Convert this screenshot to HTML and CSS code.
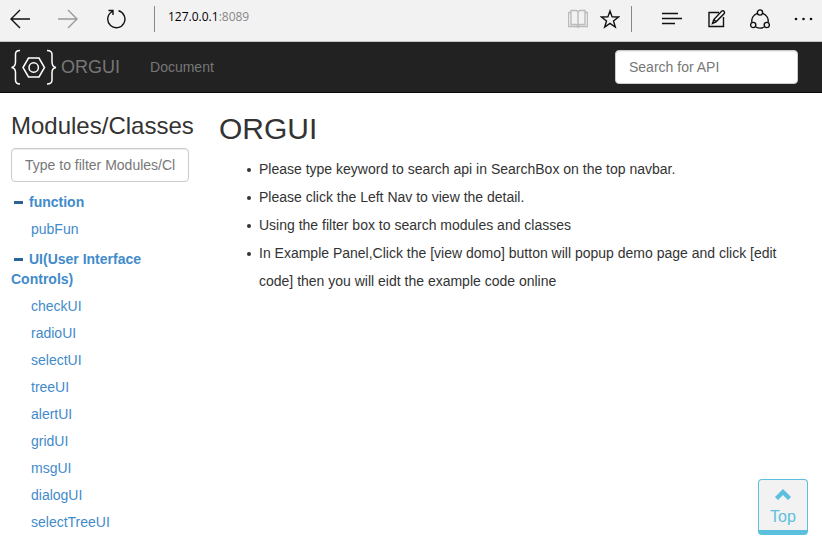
FILE: index.html
```html
<!DOCTYPE html>
<html lang="en">
<head>
<meta charset="utf-8">
<title>ORGUI</title>
<link rel="stylesheet" href="styles.css">
</head>
<body>
<div class="browser" role="toolbar" aria-label="Browser">
  <button class="tool back" aria-label="Back"><svg width="20" height="20" viewBox="0 0 20 20"><path d="M20 10H1M10 1L1 10l9 9"/></svg></button>
  <button class="tool forward" aria-label="Forward"><svg width="20" height="20" viewBox="0 0 20 20"><path d="M0 10h19M10 1l9 9-9 9"/></svg></button>
  <button class="tool reload" aria-label="Refresh"><svg width="20" height="20" viewBox="0 0 20 20"><path d="M12.500 1.800A8.600 8.600 0 1 1 5.500 3L6.500 2M2.500 1.500H7V6"/></svg></button>
  <span class="divider"></span>
  <div class="address"><span class="host">127.0.0.1</span>:8089</div>
  <button class="tool reading" aria-label="Reading view"><svg width="20" height="20" viewBox="0 0 20 20"><path d="M3 3.500H.5v14h8l1.500 1 1.500-1h8v-14H17M10 3v14M10 3L8.500 1.500H3v14h5.500L10 17l1.500-1.500H17v-14h-5.500z"/></svg></button>
  <button class="tool star" aria-label="Add to favorites"><svg width="20" height="20" viewBox="0 0 20 20"><path d="M10 2l2.100 5.900 6.400.1-5 3.900 1.800 6.100-5.300-3.600L4.700 18l1.800-6.100-5-3.900 6.400-.1z"/></svg></button>
  <span class="divider"></span>
  <button class="tool hub" aria-label="Hub"><svg width="20" height="20" viewBox="0 0 20 20"><path d="M0 4.500h16M0 9.500h20M0 14.500h13"/></svg></button>
  <button class="tool note" aria-label="Make a web note"><svg width="20" height="20" viewBox="0 0 20 20"><path d="M13 3.500H3v14h14.500V8M6.500 14.500l1.300-4L15.800 2q1.500-.8 2.300.3t.2 2.200L10 12.800zM7.800 10.500l2.200 2.300"/></svg></button>
  <button class="tool share" aria-label="Share"><svg width="20" height="20" viewBox="0 0 20 20"><circle cx="10" cy="3.500" r="2.600"/><circle cx="3.200" cy="16" r="2.600"/><circle cx="16.800" cy="16" r="2.600"/><path d="M7.300 4.300A8.500 8.500 0 0 0 1.900 13.500M12.700 4.300a8.500 8.500 0 0 1 5.400 9.200M5.800 18a9 9 0 0 0 8.400 0"/></svg></button>
  <button class="tool more" aria-label="More"><svg width="20" height="20" viewBox="0 0 20 20"><circle cx="2" cy="10" r="1.300"/><circle cx="9.500" cy="10" r="1.300"/><circle cx="17" cy="10" r="1.300"/></svg></button>
</div>
<header class="navbar">
  <a class="brand" href="#top">
    <svg width="46" height="36" viewBox="0 0 46 36" aria-hidden="true"><path d="M9 1.500C5.500 1.500 4.500 2.500 4.500 5v8c0 3-1 5-4 5.500 3 .5 4 2.500 4 5V31c0 2.500 1 4 4.500 4M36 1.500c4 0 5 1.500 5 4V13c0 3 1 5 4 5.500-3 .5-4 2.500-4 5V31c0 2.500-1 4-5 4M12 18.500l5.500-9.500h10.500l5.500 9.500-5.500 9.500H17.500z"/><circle cx="22.700" cy="18.500" r="4.700"/></svg>
    <span>ORGUI</span>
  </a>
  <nav><a class="navlink" href="#document">Document</a></nav>
  <input class="field search" type="text" placeholder="Search for API" aria-label="Search for API">
</header>
<div class="layout" id="top">
  <aside class="sidebar">
    <h2>Modules/Classes</h2>
    <input class="field" type="text" placeholder="Type to filter Modules/Classes" aria-label="Filter modules and classes">
    <nav>
      <a class="group" href="#function"><span class="minus"></span>function</a>
      <ul class="modules"><li><a href="#pubFun">pubFun</a></li></ul>
      <a class="group" href="#ui"><span class="minus"></span>UI(User Interface Controls)</a>
      <ul class="modules">
        <li><a href="#checkUI">checkUI</a></li>
        <li><a href="#radioUI">radioUI</a></li>
        <li><a href="#selectUI">selectUI</a></li>
        <li><a href="#treeUI">treeUI</a></li>
        <li><a href="#alertUI">alertUI</a></li>
        <li><a href="#gridUI">gridUI</a></li>
        <li><a href="#msgUI">msgUI</a></li>
        <li><a href="#dialogUI">dialogUI</a></li>
        <li><a href="#selectTreeUI">selectTreeUI</a></li>
      </ul>
    </nav>
  </aside>
  <main class="content" id="document">
    <h1>ORGUI</h1>
    <ul>
      <li>Please type keyword to search api in SearchBox on the top navbar.</li>
      <li>Please click the Left Nav to view the detail.</li>
      <li>Using the filter box to search modules and classes</li>
      <li>In Example Panel,Click the [view domo] button will popup demo page and click [edit code] then you will eidt the example code online</li>
    </ul>
  </main>
</div>
<a class="to-top" href="#top"><svg width="16" height="11" viewBox="0 0 16 11" aria-hidden="true"><path d="M8 0l8 8-3 3-5-5-5 5-3-3z"/></svg>Top</a>
</body>
</html>
```

FILE: styles.css
```css
* { box-sizing: border-box; }

body {
  margin: 0;
  background: #fff;
  color: #333;
  font: 14px/20px "Liberation Sans", Arial, sans-serif;
}

a { color: #428bca; text-decoration: none; }
ul { margin: 0; padding: 0; }

.browser {
  display: flex;
  align-items: center;
  height: 42px;
  padding: 0 8px 4px 10px;
  background: #f2f2f2;
  border-bottom: 1px solid #c4c4c4;
}
.tool {
  flex: none;
  width: 20px;
  height: 20px;
  padding: 0;
  border: 0;
  background: none;
  color: #111;
}
.tool svg {
  display: block;
  fill: none;
  stroke: currentColor;
  stroke-width: 1.4;
}
.forward { margin-left: 28px; color: #999; }
.reload { margin: 0 28px; }
.divider { width: 1px; height: 26px; background: #888; }
.address {
  flex: 1;
  padding: 0 0 4px 13px;
  color: #888;
  font: 12px/16px "Open Sans", sans-serif;
}
.host { color: #000; }
.reading { color: #bbb; }
.star { margin: 0 11px 0 12px; }
.hub { margin-left: 30px; }
.note { margin: 0 24px; }
.share { margin-right: 24px; }
.more svg { fill: currentColor; stroke: none; }

.navbar {
  display: flex;
  align-items: center;
  height: 51px;
  padding: 0 24px 0 11px;
  background: #222;
  border-bottom: 1px solid #080808;
}
.brand {
  display: flex;
  align-items: center;
  gap: 4px;
  color: #777;
  font-size: 18px;
}
.brand svg { fill: none; stroke: #fff; stroke-width: 1.5; }
.navlink { margin-left: 30px; color: #777; }

.field {
  display: block;
  width: 100%;
  height: 34px;
  padding: 6px 13px;
  border: 1px solid #ccc;
  border-radius: 4px;
  background: #fff;
  color: #555;
  font: inherit;
  box-shadow: inset 0 1px 1px rgba(0, 0, 0, .075);
}
.field::placeholder { color: #777; opacity: 1; }
.search { width: 183px; margin-left: auto; }

.layout {
  display: grid;
  grid-template-columns: 178px 1fr;
  gap: 30px;
  padding: 20px 30px 0 11px;
}
h1, h2 { margin: 0; font-weight: 400; }
h2 { margin-bottom: 9px; font-size: 24px; line-height: 26px; white-space: nowrap; }
h1 { font-size: 30px; line-height: 32px; }

.sidebar nav { padding-top: 10px; }
.group { display: block; font-weight: 700; }
.minus {
  display: inline-block;
  width: 9px;
  height: 3px;
  margin: 0 6px 3px 3px;
  background: #2a6496;
}
.modules {
  margin: 4px 0 6px;
  padding-left: 20px;
  list-style: none;
  line-height: 27px;
}

.content ul {
  margin-top: 10px;
  padding-left: 40px;
  line-height: 28px;
  list-style: none;
}
.content li::before {
  content: "";
  float: left;
  width: 4px;
  height: 4px;
  margin: 13px 0 0 -12px;
  border-radius: 50%;
  background: #333;
}

.to-top {
  position: fixed;
  right: 14px;
  bottom: 9px;
  display: flex;
  flex-direction: column;
  align-items: center;
  gap: 7px;
  width: 50px;
  padding: 9px 0 3px;
  border: 1px solid #5bc0de;
  border-bottom-width: 5px;
  border-radius: 4px;
  background: #f2f2f2;
  color: #5bc0de;
  font-size: 16px;
}
.to-top svg { fill: currentColor; }
```
